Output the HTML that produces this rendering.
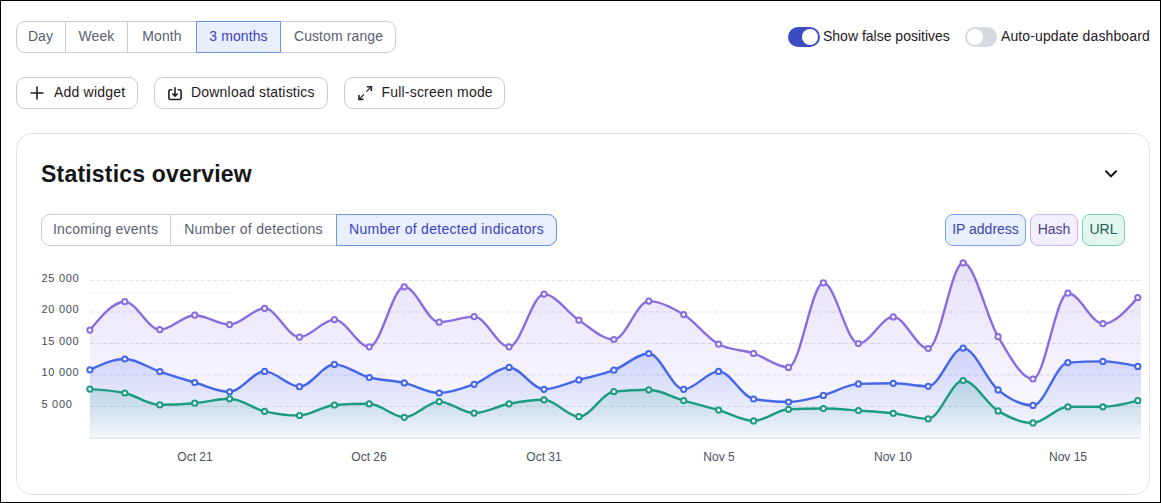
<!DOCTYPE html>
<html><head><meta charset="utf-8">
<style>
*{box-sizing:border-box;margin:0;padding:0}
html,body{width:1161px;height:503px;overflow:hidden;background:#fff}
body{position:relative;font-family:"Liberation Sans",sans-serif;color:#1f2023}
.frame{position:absolute;left:0;top:0;width:1161px;height:503px;border:1px solid #000;pointer-events:none;z-index:10}
.abs{position:absolute}
.seg{position:absolute;left:16px;top:21px;height:32px;display:flex;border:1px solid #c8ccd3;border-radius:9px;overflow:visible}
.seg div{height:30px;line-height:29px;font-size:14px;letter-spacing:0.1px;color:#5b6170;text-align:center;border-left:1px solid #c8ccd3}
.seg div:first-child{border-left:none}
.seg .on{background:#e9effd;color:#3a46b5;outline:1px solid #6e95ee;position:relative;z-index:2}
.btn{position:absolute;top:77px;height:32px;border:1px solid #c8ccd3;border-radius:9px;font-size:14px;line-height:30px;color:#1f2023;white-space:nowrap;letter-spacing:0.2px}
.btn span{position:absolute;top:-0.6px}
.btn svg{position:absolute}
.tog{position:absolute;top:27px;width:32px;height:20px;border-radius:10px}
.tog i{position:absolute;top:2px;width:16px;height:16px;border-radius:50%;background:#fff}
.lbl{position:absolute;top:26px;font-size:14px;line-height:20px;color:#1f2023;white-space:nowrap}
.card{position:absolute;left:16px;top:133px;width:1134px;height:362px;border:1px solid #dfe2e8;border-radius:16px}
.title{position:absolute;left:41px;top:159px;font-size:23px;font-weight:bold;line-height:30px;letter-spacing:0.2px;color:#161618;white-space:nowrap}
.tabs{position:absolute;left:41px;top:214px;height:32px;display:flex;border:1px solid #c8ccd3;border-radius:9px}
.tabs div{height:30px;line-height:29px;font-size:14px;letter-spacing:0.22px;color:#5b6170;text-align:center;border-left:1px solid #c8ccd3}
.tabs div:first-child{border-left:none}
.tabs .on{background:#e9effd;color:#3a46b5;outline:1px solid #6e95ee;position:relative;z-index:2;border-radius:0 8px 8px 0}
.chip{position:absolute;top:214px;height:32px;border-radius:8px;border:1px solid;font-size:14px;line-height:29px;text-align:center;white-space:nowrap}
.yl{position:absolute;left:41.5px;font-size:11px;line-height:14px;color:#474c58;white-space:nowrap;letter-spacing:0.7px}
.xl{position:absolute;top:450px;font-size:12px;line-height:14px;color:#4b505c;white-space:nowrap;width:60px;text-align:center}
.grp{position:absolute;height:32px;border:1px solid #c8ccd3;border-radius:9px}
.sep{position:absolute;width:1px;height:30px;background:#c8ccd3}
.act{position:absolute;height:32px;border:1px solid #6e95ee;background:#e9effd}
.st{position:absolute;height:32px;line-height:31px;font-size:14px;color:#5b6170;text-align:center;white-space:nowrap;letter-spacing:0.1px}
.st.on{color:#3a43bd}
svg.chart{position:absolute;left:0;top:0}
</style></head><body>
<div class="frame"></div>

<div class="grp" style="left:16px;top:21px;width:380px"></div>
<div class="sep" style="left:65px;top:22px"></div>
<div class="sep" style="left:127px;top:22px"></div>
<div class="act" style="left:196px;top:21px;width:85px"></div>
<div class="st" style="left:16px;top:21px;width:49px">Day</div>
<div class="st" style="left:66px;top:21px;width:61px">Week</div>
<div class="st" style="left:128px;top:21px;width:68px">Month</div>
<div class="st on" style="left:197px;top:21px;width:83px">3 months</div>
<div class="st" style="left:281px;top:21px;width:115px">Custom range</div>

<div class="tog" style="left:788px;background:#3b4cc0"><i style="left:14px"></i></div>
<div class="lbl" style="left:823px">Show false positives</div>
<div class="tog" style="left:965px;background:#d5d9e0"><i style="left:2px"></i></div>
<div class="lbl" style="left:1001px;letter-spacing:0.12px">Auto-update dashboard</div>

<div class="btn" style="left:16px;width:122px">
  <svg style="left:13px;top:8px" width="14" height="14" viewBox="0 0 14 14"><path d="M7 0.5V13.5M0.5 7H13.5" stroke="#1f2023" stroke-width="1.6" fill="none"/></svg>
  <span style="left:37px">Add widget</span>
</div>
<div class="btn" style="left:154px;width:174px">
  <svg style="left:13px;top:9px" width="15" height="15" viewBox="0 0 15 15"><path d="M4.3 2.8H2.4Q0.9 2.8 0.9 4.3V11Q0.9 12.5 2.4 12.5H11.6Q13.1 12.5 13.1 11V4.3Q13.1 2.8 11.6 2.8H9.7M7 0.3V9.2M4.3 6.5L7 9.2L9.7 6.5" stroke="#1f2023" stroke-width="1.6" fill="none"/></svg>
  <span style="left:36px">Download statistics</span>
</div>
<div class="btn" style="left:344px;width:161px">
  <svg style="left:13px;top:8px" width="15" height="15" viewBox="0 0 15 15"><path d="M8.9 0.6H13.4V5.1M1.0 9.0V13.4H5.4" stroke="#1f2023" stroke-width="1.6" fill="none"/><path d="M12.6 1.4L8.5 5.6M1.8 12.6L5.9 8.4" stroke="#1f2023" stroke-width="1.3" fill="none"/></svg>
  <span style="left:36.5px">Full-screen mode</span>
</div>

<div class="card"></div>
<div class="title">Statistics overview</div>
<svg class="abs" style="left:1104px;top:169px" width="14" height="12" viewBox="0 0 14 12"><path d="M2 2.3L7 7.4L12 2.3" stroke="#121214" stroke-width="2" stroke-linecap="round" stroke-linejoin="round" fill="none"/></svg>

<div class="grp" style="left:41px;top:214px;width:516px"></div>
<div class="sep" style="left:170px;top:215px"></div>
<div class="act" style="left:336px;top:214px;width:221px;border-radius:0 9px 9px 0"></div>
<div class="st" style="left:41px;top:214px;width:129px;letter-spacing:0.22px">Incoming events</div>
<div class="st" style="left:171px;top:214px;width:165px;letter-spacing:0.28px">Number of detections</div>
<div class="st on" style="left:337px;top:214px;width:219px;letter-spacing:0.28px">Number of detected indicators</div>

<div class="chip" style="left:945px;width:81px;background:#e8effd;border-color:#7ba1f0;color:#3a46a5">IP address</div>
<div class="chip" style="left:1030px;width:48px;background:#f3f0fd;border-color:#c7b6f0;color:#4a3f8a">Hash</div>
<div class="chip" style="left:1082px;width:43px;background:#e2f6f0;border-color:#80cfb8;color:#245f55">URL</div>

<div class="yl" style="top:270.5px">25 000</div>
<div class="yl" style="top:302px">20 000</div>
<div class="yl" style="top:333.5px">15 000</div>
<div class="yl" style="top:365px">10 000</div>
<div class="yl" style="top:396.5px">5 000</div>

<div class="xl" style="left:165px">Oct 21</div>
<div class="xl" style="left:339px">Oct 26</div>
<div class="xl" style="left:514px">Oct 31</div>
<div class="xl" style="left:689px">Nov 5</div>
<div class="xl" style="left:863px">Nov 10</div>
<div class="xl" style="left:1038px">Nov 15</div>

<svg class="chart" width="1161" height="503" viewBox="0 0 1161 503">
<defs>
<linearGradient id="gp" x1="0" y1="0" x2="0" y2="1" gradientUnits="objectBoundingBox"><stop offset="0" stop-color="#8a6cdf" stop-opacity="0.2"/><stop offset="1" stop-color="#8a6cdf" stop-opacity="0.02"/></linearGradient>
<linearGradient id="gb" x1="0" y1="0" x2="0" y2="1"><stop offset="0" stop-color="#4d6ef0" stop-opacity="0.22"/><stop offset="1" stop-color="#4d6ef0" stop-opacity="0.02"/></linearGradient>
<linearGradient id="gg" x1="0" y1="0" x2="0" y2="1"><stop offset="0" stop-color="#22a3a0" stop-opacity="0.22"/><stop offset="1" stop-color="#1d8f84" stop-opacity="0.02"/></linearGradient>
<clipPath id="cl"><rect x="89.5" y="250" width="1051.5" height="190"/></clipPath>
</defs>
<line x1="90" y1="280.4" x2="1141" y2="280.4" stroke="#dfe1e7" stroke-width="1" stroke-dasharray="4 2.5"/>
<line x1="90" y1="312.0" x2="1141" y2="312.0" stroke="#dfe1e7" stroke-width="1" stroke-dasharray="4 2.5"/>
<line x1="90" y1="343.5" x2="1141" y2="343.5" stroke="#dfe1e7" stroke-width="1" stroke-dasharray="4 2.5"/>
<line x1="90" y1="375.0" x2="1141" y2="375.0" stroke="#dfe1e7" stroke-width="1" stroke-dasharray="4 2.5"/>
<line x1="90" y1="406.5" x2="1141" y2="406.5" stroke="#dfe1e7" stroke-width="1" stroke-dasharray="4 2.5"/>
<line x1="89" y1="293" x2="233" y2="293" stroke="#f3f3f5" stroke-width="1"/>
<line x1="89.5" y1="438.2" x2="1141" y2="438.2" stroke="#e8e9ee" stroke-width="1.6"/>
<g clip-path="url(#cl)">
<path d="M89.90,330.10 C101.54,315.90 113.19,301.70 124.83,301.70 C136.47,301.70 148.12,329.70 159.76,329.70 C171.40,329.70 183.05,315.20 194.69,315.20 C206.33,315.20 217.98,324.60 229.62,324.60 C241.26,324.60 252.91,308.30 264.55,308.30 C276.19,308.30 287.84,337.10 299.48,337.10 C311.12,337.10 322.77,319.60 334.41,319.60 C346.05,319.60 357.70,346.80 369.34,346.80 C380.98,346.80 392.63,286.80 404.27,286.80 C415.91,286.80 427.56,322.20 439.20,322.20 C450.84,322.20 462.49,316.60 474.13,316.60 C485.77,316.60 497.42,346.80 509.06,346.80 C520.70,346.80 532.35,294.10 543.99,294.10 C555.63,294.10 567.28,312.63 578.92,320.20 C590.56,327.77 602.21,339.50 613.85,339.50 C625.49,339.50 637.14,301.10 648.78,301.10 C660.42,301.10 672.07,307.42 683.71,314.60 C695.35,321.78 707.00,338.07 718.64,344.20 C730.28,350.33 741.93,349.53 753.57,353.40 C765.21,357.27 776.86,367.40 788.50,367.40 C800.14,367.40 811.79,282.80 823.43,282.80 C835.07,282.80 846.72,343.50 858.36,343.50 C870.00,343.50 881.65,316.90 893.29,316.90 C904.93,316.90 916.58,348.50 928.22,348.50 C939.86,348.50 951.51,262.80 963.15,262.80 C974.79,262.80 986.44,317.33 998.08,336.70 C1009.72,356.07 1021.37,379.00 1033.01,379.00 C1044.65,379.00 1056.30,293.20 1067.94,293.20 C1079.58,293.20 1091.23,323.70 1102.87,323.70 C1114.51,323.70 1126.16,310.65 1137.80,297.60 L1141,297.6 L1141,438.0 L89.9,438.0 Z" fill="url(#gp)"/>

<path d="M89.90,369.80 C101.54,364.40 113.19,359.00 124.83,359.00 C136.47,359.00 148.12,367.68 159.76,371.60 C171.40,375.52 183.05,379.13 194.69,382.50 C206.33,385.87 217.98,391.80 229.62,391.80 C241.26,391.80 252.91,371.40 264.55,371.40 C276.19,371.40 287.84,386.70 299.48,386.70 C311.12,386.70 322.77,364.40 334.41,364.40 C346.05,364.40 357.70,374.42 369.34,377.50 C380.98,380.58 392.63,380.32 404.27,382.90 C415.91,385.48 427.56,393.00 439.20,393.00 C450.84,393.00 462.49,388.57 474.13,384.30 C485.77,380.03 497.42,367.40 509.06,367.40 C520.70,367.40 532.35,389.30 543.99,389.30 C555.63,389.30 567.28,383.08 578.92,379.90 C590.56,376.72 602.21,374.60 613.85,370.20 C625.49,365.80 637.14,353.50 648.78,353.50 C660.42,353.50 672.07,389.30 683.71,389.30 C695.35,389.30 707.00,371.40 718.64,371.40 C730.28,371.40 741.93,397.00 753.57,399.00 C765.21,401.00 776.86,402.00 788.50,402.00 C800.14,402.00 811.79,398.42 823.43,395.40 C835.07,392.38 846.72,384.30 858.36,383.90 C870.00,383.50 881.65,383.30 893.29,383.30 C904.93,383.30 916.58,386.30 928.22,386.30 C939.86,386.30 951.51,348.10 963.15,348.10 C974.79,348.10 986.44,380.35 998.08,389.90 C1009.72,399.45 1021.37,405.40 1033.01,405.40 C1044.65,405.40 1056.30,363.40 1067.94,362.60 C1079.58,361.80 1091.23,361.40 1102.87,361.40 C1114.51,361.40 1126.16,363.90 1137.80,366.40 L1141,366.4 L1141,438.0 L89.9,438.0 Z" fill="url(#gb)"/>

<path d="M89.90,389.10 C101.54,389.75 113.19,390.40 124.83,393.00 C136.47,395.60 148.12,404.80 159.76,404.80 C171.40,404.80 183.05,404.20 194.69,403.20 C206.33,402.20 217.98,398.80 229.62,398.80 C241.26,398.80 252.91,408.52 264.55,411.30 C276.19,414.08 287.84,415.50 299.48,415.50 C311.12,415.50 322.77,405.80 334.41,405.00 C346.05,404.20 357.70,403.80 369.34,403.80 C380.98,403.80 392.63,417.30 404.27,417.30 C415.91,417.30 427.56,401.60 439.20,401.60 C450.84,401.60 462.49,413.10 474.13,413.10 C485.77,413.10 497.42,406.02 509.06,403.80 C520.70,401.58 532.35,399.80 543.99,399.80 C555.63,399.80 567.28,416.70 578.92,416.70 C590.56,416.70 602.21,392.80 613.85,391.60 C625.49,390.40 637.14,389.80 648.78,389.80 C660.42,389.80 672.07,397.22 683.71,400.60 C695.35,403.98 707.00,406.72 718.64,410.10 C730.28,413.48 741.93,420.90 753.57,420.90 C765.21,420.90 776.86,409.83 788.50,409.30 C800.14,408.77 811.79,408.50 823.43,408.50 C835.07,408.50 846.72,409.70 858.36,410.50 C870.00,411.30 881.65,411.92 893.29,413.30 C904.93,414.68 916.58,418.80 928.22,418.80 C939.86,418.80 951.51,380.50 963.15,380.50 C974.79,380.50 986.44,403.83 998.08,410.90 C1009.72,417.97 1021.37,422.90 1033.01,422.90 C1044.65,422.90 1056.30,406.80 1067.94,406.80 C1079.58,406.80 1091.23,406.80 1102.87,406.80 C1114.51,406.80 1126.16,403.70 1137.80,400.60 L1141,400.6 L1141,438.0 L89.9,438.0 Z" fill="url(#gg)"/>

<path d="M89.90,330.10 C101.54,315.90 113.19,301.70 124.83,301.70 C136.47,301.70 148.12,329.70 159.76,329.70 C171.40,329.70 183.05,315.20 194.69,315.20 C206.33,315.20 217.98,324.60 229.62,324.60 C241.26,324.60 252.91,308.30 264.55,308.30 C276.19,308.30 287.84,337.10 299.48,337.10 C311.12,337.10 322.77,319.60 334.41,319.60 C346.05,319.60 357.70,346.80 369.34,346.80 C380.98,346.80 392.63,286.80 404.27,286.80 C415.91,286.80 427.56,322.20 439.20,322.20 C450.84,322.20 462.49,316.60 474.13,316.60 C485.77,316.60 497.42,346.80 509.06,346.80 C520.70,346.80 532.35,294.10 543.99,294.10 C555.63,294.10 567.28,312.63 578.92,320.20 C590.56,327.77 602.21,339.50 613.85,339.50 C625.49,339.50 637.14,301.10 648.78,301.10 C660.42,301.10 672.07,307.42 683.71,314.60 C695.35,321.78 707.00,338.07 718.64,344.20 C730.28,350.33 741.93,349.53 753.57,353.40 C765.21,357.27 776.86,367.40 788.50,367.40 C800.14,367.40 811.79,282.80 823.43,282.80 C835.07,282.80 846.72,343.50 858.36,343.50 C870.00,343.50 881.65,316.90 893.29,316.90 C904.93,316.90 916.58,348.50 928.22,348.50 C939.86,348.50 951.51,262.80 963.15,262.80 C974.79,262.80 986.44,317.33 998.08,336.70 C1009.72,356.07 1021.37,379.00 1033.01,379.00 C1044.65,379.00 1056.30,293.20 1067.94,293.20 C1079.58,293.20 1091.23,323.70 1102.87,323.70 C1114.51,323.70 1126.16,310.65 1137.80,297.60" fill="none" stroke="#8a6cdf" stroke-width="2.4"/>

<path d="M89.90,369.80 C101.54,364.40 113.19,359.00 124.83,359.00 C136.47,359.00 148.12,367.68 159.76,371.60 C171.40,375.52 183.05,379.13 194.69,382.50 C206.33,385.87 217.98,391.80 229.62,391.80 C241.26,391.80 252.91,371.40 264.55,371.40 C276.19,371.40 287.84,386.70 299.48,386.70 C311.12,386.70 322.77,364.40 334.41,364.40 C346.05,364.40 357.70,374.42 369.34,377.50 C380.98,380.58 392.63,380.32 404.27,382.90 C415.91,385.48 427.56,393.00 439.20,393.00 C450.84,393.00 462.49,388.57 474.13,384.30 C485.77,380.03 497.42,367.40 509.06,367.40 C520.70,367.40 532.35,389.30 543.99,389.30 C555.63,389.30 567.28,383.08 578.92,379.90 C590.56,376.72 602.21,374.60 613.85,370.20 C625.49,365.80 637.14,353.50 648.78,353.50 C660.42,353.50 672.07,389.30 683.71,389.30 C695.35,389.30 707.00,371.40 718.64,371.40 C730.28,371.40 741.93,397.00 753.57,399.00 C765.21,401.00 776.86,402.00 788.50,402.00 C800.14,402.00 811.79,398.42 823.43,395.40 C835.07,392.38 846.72,384.30 858.36,383.90 C870.00,383.50 881.65,383.30 893.29,383.30 C904.93,383.30 916.58,386.30 928.22,386.30 C939.86,386.30 951.51,348.10 963.15,348.10 C974.79,348.10 986.44,380.35 998.08,389.90 C1009.72,399.45 1021.37,405.40 1033.01,405.40 C1044.65,405.40 1056.30,363.40 1067.94,362.60 C1079.58,361.80 1091.23,361.40 1102.87,361.40 C1114.51,361.40 1126.16,363.90 1137.80,366.40" fill="none" stroke="#4466ea" stroke-width="2.4"/>

<path d="M89.90,389.10 C101.54,389.75 113.19,390.40 124.83,393.00 C136.47,395.60 148.12,404.80 159.76,404.80 C171.40,404.80 183.05,404.20 194.69,403.20 C206.33,402.20 217.98,398.80 229.62,398.80 C241.26,398.80 252.91,408.52 264.55,411.30 C276.19,414.08 287.84,415.50 299.48,415.50 C311.12,415.50 322.77,405.80 334.41,405.00 C346.05,404.20 357.70,403.80 369.34,403.80 C380.98,403.80 392.63,417.30 404.27,417.30 C415.91,417.30 427.56,401.60 439.20,401.60 C450.84,401.60 462.49,413.10 474.13,413.10 C485.77,413.10 497.42,406.02 509.06,403.80 C520.70,401.58 532.35,399.80 543.99,399.80 C555.63,399.80 567.28,416.70 578.92,416.70 C590.56,416.70 602.21,392.80 613.85,391.60 C625.49,390.40 637.14,389.80 648.78,389.80 C660.42,389.80 672.07,397.22 683.71,400.60 C695.35,403.98 707.00,406.72 718.64,410.10 C730.28,413.48 741.93,420.90 753.57,420.90 C765.21,420.90 776.86,409.83 788.50,409.30 C800.14,408.77 811.79,408.50 823.43,408.50 C835.07,408.50 846.72,409.70 858.36,410.50 C870.00,411.30 881.65,411.92 893.29,413.30 C904.93,414.68 916.58,418.80 928.22,418.80 C939.86,418.80 951.51,380.50 963.15,380.50 C974.79,380.50 986.44,403.83 998.08,410.90 C1009.72,417.97 1021.37,422.90 1033.01,422.90 C1044.65,422.90 1056.30,406.80 1067.94,406.80 C1079.58,406.80 1091.23,406.80 1102.87,406.80 C1114.51,406.80 1126.16,403.70 1137.80,400.60" fill="none" stroke="#1b9c80" stroke-width="2.4"/>

</g>
<circle cx="89.9" cy="330.1" r="2.6" fill="#fff" stroke="#8a6cdf" stroke-width="2"/>
<circle cx="124.8" cy="301.7" r="2.6" fill="#fff" stroke="#8a6cdf" stroke-width="2"/>
<circle cx="159.8" cy="329.7" r="2.6" fill="#fff" stroke="#8a6cdf" stroke-width="2"/>
<circle cx="194.7" cy="315.2" r="2.6" fill="#fff" stroke="#8a6cdf" stroke-width="2"/>
<circle cx="229.6" cy="324.6" r="2.6" fill="#fff" stroke="#8a6cdf" stroke-width="2"/>
<circle cx="264.6" cy="308.3" r="2.6" fill="#fff" stroke="#8a6cdf" stroke-width="2"/>
<circle cx="299.5" cy="337.1" r="2.6" fill="#fff" stroke="#8a6cdf" stroke-width="2"/>
<circle cx="334.4" cy="319.6" r="2.6" fill="#fff" stroke="#8a6cdf" stroke-width="2"/>
<circle cx="369.3" cy="346.8" r="2.6" fill="#fff" stroke="#8a6cdf" stroke-width="2"/>
<circle cx="404.3" cy="286.8" r="2.6" fill="#fff" stroke="#8a6cdf" stroke-width="2"/>
<circle cx="439.2" cy="322.2" r="2.6" fill="#fff" stroke="#8a6cdf" stroke-width="2"/>
<circle cx="474.1" cy="316.6" r="2.6" fill="#fff" stroke="#8a6cdf" stroke-width="2"/>
<circle cx="509.1" cy="346.8" r="2.6" fill="#fff" stroke="#8a6cdf" stroke-width="2"/>
<circle cx="544.0" cy="294.1" r="2.6" fill="#fff" stroke="#8a6cdf" stroke-width="2"/>
<circle cx="578.9" cy="320.2" r="2.6" fill="#fff" stroke="#8a6cdf" stroke-width="2"/>
<circle cx="613.9" cy="339.5" r="2.6" fill="#fff" stroke="#8a6cdf" stroke-width="2"/>
<circle cx="648.8" cy="301.1" r="2.6" fill="#fff" stroke="#8a6cdf" stroke-width="2"/>
<circle cx="683.7" cy="314.6" r="2.6" fill="#fff" stroke="#8a6cdf" stroke-width="2"/>
<circle cx="718.6" cy="344.2" r="2.6" fill="#fff" stroke="#8a6cdf" stroke-width="2"/>
<circle cx="753.6" cy="353.4" r="2.6" fill="#fff" stroke="#8a6cdf" stroke-width="2"/>
<circle cx="788.5" cy="367.4" r="2.6" fill="#fff" stroke="#8a6cdf" stroke-width="2"/>
<circle cx="823.4" cy="282.8" r="2.6" fill="#fff" stroke="#8a6cdf" stroke-width="2"/>
<circle cx="858.4" cy="343.5" r="2.6" fill="#fff" stroke="#8a6cdf" stroke-width="2"/>
<circle cx="893.3" cy="316.9" r="2.6" fill="#fff" stroke="#8a6cdf" stroke-width="2"/>
<circle cx="928.2" cy="348.5" r="2.6" fill="#fff" stroke="#8a6cdf" stroke-width="2"/>
<circle cx="963.1" cy="262.8" r="2.6" fill="#fff" stroke="#8a6cdf" stroke-width="2"/>
<circle cx="998.1" cy="336.7" r="2.6" fill="#fff" stroke="#8a6cdf" stroke-width="2"/>
<circle cx="1033.0" cy="379.0" r="2.6" fill="#fff" stroke="#8a6cdf" stroke-width="2"/>
<circle cx="1067.9" cy="293.2" r="2.6" fill="#fff" stroke="#8a6cdf" stroke-width="2"/>
<circle cx="1102.9" cy="323.7" r="2.6" fill="#fff" stroke="#8a6cdf" stroke-width="2"/>
<circle cx="1137.8" cy="297.6" r="2.6" fill="#fff" stroke="#8a6cdf" stroke-width="2"/>
<circle cx="89.9" cy="369.8" r="2.6" fill="#fff" stroke="#4466ea" stroke-width="2"/>
<circle cx="124.8" cy="359.0" r="2.6" fill="#fff" stroke="#4466ea" stroke-width="2"/>
<circle cx="159.8" cy="371.6" r="2.6" fill="#fff" stroke="#4466ea" stroke-width="2"/>
<circle cx="194.7" cy="382.5" r="2.6" fill="#fff" stroke="#4466ea" stroke-width="2"/>
<circle cx="229.6" cy="391.8" r="2.6" fill="#fff" stroke="#4466ea" stroke-width="2"/>
<circle cx="264.6" cy="371.4" r="2.6" fill="#fff" stroke="#4466ea" stroke-width="2"/>
<circle cx="299.5" cy="386.7" r="2.6" fill="#fff" stroke="#4466ea" stroke-width="2"/>
<circle cx="334.4" cy="364.4" r="2.6" fill="#fff" stroke="#4466ea" stroke-width="2"/>
<circle cx="369.3" cy="377.5" r="2.6" fill="#fff" stroke="#4466ea" stroke-width="2"/>
<circle cx="404.3" cy="382.9" r="2.6" fill="#fff" stroke="#4466ea" stroke-width="2"/>
<circle cx="439.2" cy="393.0" r="2.6" fill="#fff" stroke="#4466ea" stroke-width="2"/>
<circle cx="474.1" cy="384.3" r="2.6" fill="#fff" stroke="#4466ea" stroke-width="2"/>
<circle cx="509.1" cy="367.4" r="2.6" fill="#fff" stroke="#4466ea" stroke-width="2"/>
<circle cx="544.0" cy="389.3" r="2.6" fill="#fff" stroke="#4466ea" stroke-width="2"/>
<circle cx="578.9" cy="379.9" r="2.6" fill="#fff" stroke="#4466ea" stroke-width="2"/>
<circle cx="613.9" cy="370.2" r="2.6" fill="#fff" stroke="#4466ea" stroke-width="2"/>
<circle cx="648.8" cy="353.5" r="2.6" fill="#fff" stroke="#4466ea" stroke-width="2"/>
<circle cx="683.7" cy="389.3" r="2.6" fill="#fff" stroke="#4466ea" stroke-width="2"/>
<circle cx="718.6" cy="371.4" r="2.6" fill="#fff" stroke="#4466ea" stroke-width="2"/>
<circle cx="753.6" cy="399.0" r="2.6" fill="#fff" stroke="#4466ea" stroke-width="2"/>
<circle cx="788.5" cy="402.0" r="2.6" fill="#fff" stroke="#4466ea" stroke-width="2"/>
<circle cx="823.4" cy="395.4" r="2.6" fill="#fff" stroke="#4466ea" stroke-width="2"/>
<circle cx="858.4" cy="383.9" r="2.6" fill="#fff" stroke="#4466ea" stroke-width="2"/>
<circle cx="893.3" cy="383.3" r="2.6" fill="#fff" stroke="#4466ea" stroke-width="2"/>
<circle cx="928.2" cy="386.3" r="2.6" fill="#fff" stroke="#4466ea" stroke-width="2"/>
<circle cx="963.1" cy="348.1" r="2.6" fill="#fff" stroke="#4466ea" stroke-width="2"/>
<circle cx="998.1" cy="389.9" r="2.6" fill="#fff" stroke="#4466ea" stroke-width="2"/>
<circle cx="1033.0" cy="405.4" r="2.6" fill="#fff" stroke="#4466ea" stroke-width="2"/>
<circle cx="1067.9" cy="362.6" r="2.6" fill="#fff" stroke="#4466ea" stroke-width="2"/>
<circle cx="1102.9" cy="361.4" r="2.6" fill="#fff" stroke="#4466ea" stroke-width="2"/>
<circle cx="1137.8" cy="366.4" r="2.6" fill="#fff" stroke="#4466ea" stroke-width="2"/>
<circle cx="89.9" cy="389.1" r="2.6" fill="#fff" stroke="#1b9c80" stroke-width="2"/>
<circle cx="124.8" cy="393.0" r="2.6" fill="#fff" stroke="#1b9c80" stroke-width="2"/>
<circle cx="159.8" cy="404.8" r="2.6" fill="#fff" stroke="#1b9c80" stroke-width="2"/>
<circle cx="194.7" cy="403.2" r="2.6" fill="#fff" stroke="#1b9c80" stroke-width="2"/>
<circle cx="229.6" cy="398.8" r="2.6" fill="#fff" stroke="#1b9c80" stroke-width="2"/>
<circle cx="264.6" cy="411.3" r="2.6" fill="#fff" stroke="#1b9c80" stroke-width="2"/>
<circle cx="299.5" cy="415.5" r="2.6" fill="#fff" stroke="#1b9c80" stroke-width="2"/>
<circle cx="334.4" cy="405.0" r="2.6" fill="#fff" stroke="#1b9c80" stroke-width="2"/>
<circle cx="369.3" cy="403.8" r="2.6" fill="#fff" stroke="#1b9c80" stroke-width="2"/>
<circle cx="404.3" cy="417.3" r="2.6" fill="#fff" stroke="#1b9c80" stroke-width="2"/>
<circle cx="439.2" cy="401.6" r="2.6" fill="#fff" stroke="#1b9c80" stroke-width="2"/>
<circle cx="474.1" cy="413.1" r="2.6" fill="#fff" stroke="#1b9c80" stroke-width="2"/>
<circle cx="509.1" cy="403.8" r="2.6" fill="#fff" stroke="#1b9c80" stroke-width="2"/>
<circle cx="544.0" cy="399.8" r="2.6" fill="#fff" stroke="#1b9c80" stroke-width="2"/>
<circle cx="578.9" cy="416.7" r="2.6" fill="#fff" stroke="#1b9c80" stroke-width="2"/>
<circle cx="613.9" cy="391.6" r="2.6" fill="#fff" stroke="#1b9c80" stroke-width="2"/>
<circle cx="648.8" cy="389.8" r="2.6" fill="#fff" stroke="#1b9c80" stroke-width="2"/>
<circle cx="683.7" cy="400.6" r="2.6" fill="#fff" stroke="#1b9c80" stroke-width="2"/>
<circle cx="718.6" cy="410.1" r="2.6" fill="#fff" stroke="#1b9c80" stroke-width="2"/>
<circle cx="753.6" cy="420.9" r="2.6" fill="#fff" stroke="#1b9c80" stroke-width="2"/>
<circle cx="788.5" cy="409.3" r="2.6" fill="#fff" stroke="#1b9c80" stroke-width="2"/>
<circle cx="823.4" cy="408.5" r="2.6" fill="#fff" stroke="#1b9c80" stroke-width="2"/>
<circle cx="858.4" cy="410.5" r="2.6" fill="#fff" stroke="#1b9c80" stroke-width="2"/>
<circle cx="893.3" cy="413.3" r="2.6" fill="#fff" stroke="#1b9c80" stroke-width="2"/>
<circle cx="928.2" cy="418.8" r="2.6" fill="#fff" stroke="#1b9c80" stroke-width="2"/>
<circle cx="963.1" cy="380.5" r="2.6" fill="#fff" stroke="#1b9c80" stroke-width="2"/>
<circle cx="998.1" cy="410.9" r="2.6" fill="#fff" stroke="#1b9c80" stroke-width="2"/>
<circle cx="1033.0" cy="422.9" r="2.6" fill="#fff" stroke="#1b9c80" stroke-width="2"/>
<circle cx="1067.9" cy="406.8" r="2.6" fill="#fff" stroke="#1b9c80" stroke-width="2"/>
<circle cx="1102.9" cy="406.8" r="2.6" fill="#fff" stroke="#1b9c80" stroke-width="2"/>
<circle cx="1137.8" cy="400.6" r="2.6" fill="#fff" stroke="#1b9c80" stroke-width="2"/>
</svg>
</body></html>
